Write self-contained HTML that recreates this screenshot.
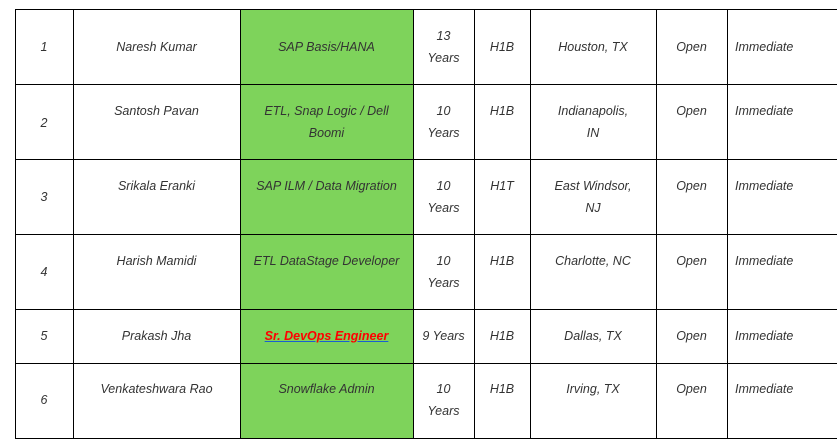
<!DOCTYPE html><html><head><style>
body{margin:0;width:837px;height:439px;background:#fff;position:relative;overflow:hidden;font-family:"Liberation Sans",sans-serif;font-style:italic;font-size:12.5px;color:#333}
.h{position:absolute;left:15px;width:822px;height:1px;background:#000}
.v{position:absolute;top:9px;width:1px;height:430px;background:#000}
.g{position:absolute;left:241px;width:172px;top:10px;height:429px;background:#7ed35b}
.t{position:absolute;line-height:16px;margin-top:-8px;text-align:center;white-space:nowrap}
.l{text-align:left}
</style></head><body>
<div class="g"></div>
<div class="h" style="top:9px"></div><div class="h" style="top:84px"></div><div class="h" style="top:159px"></div><div class="h" style="top:234px"></div><div class="h" style="top:309px"></div><div class="h" style="top:363px"></div><div class="h" style="top:438px"></div>
<div class="v" style="left:15px"></div><div class="v" style="left:73px"></div><div class="v" style="left:240px"></div><div class="v" style="left:413px"></div><div class="v" style="left:474px"></div><div class="v" style="left:530px"></div><div class="v" style="left:656px"></div><div class="v" style="left:727px"></div>
<script>
var C=[[15,73],[73,240],[240,413],[413,474],[474,530],[530,656],[656,727]];
var R=[
[[47],[47],[47],[36,58],[47],[47],[47],47],
[[123],[111],[111,133],[111,133],[111],[111,133],[111],111],
[[197],[186],[186],[186,208],[186],[186,208],[186],186],
[[272],[261],[261],[261,283],[261],[261],[261],261],
[[336],[336],[336],[336],[336],[336],[336],336],
[[400],[389],[389],[389,411],[389],[389],[389],389]];
var T=[
[["1"],["Naresh Kumar"],["SAP Basis/HANA"],["13","Years"],["H1B"],["Houston, TX"],["Open"]],
[["2"],["Santosh Pavan"],["ETL, Snap Logic / Dell","Boomi"],["10","Years"],["H1B"],["Indianapolis,","IN"],["Open"]],
[["3"],["Srikala Eranki"],["SAP ILM / Data Migration"],["10","Years"],["H1T"],["East Windsor,","NJ"],["Open"]],
[["4"],["Harish Mamidi"],["ETL DataStage Developer"],["10","Years"],["H1B"],["Charlotte, NC"],["Open"]],
[["5"],["Prakash Jha"],["<b style='color:#f00;text-decoration:underline;text-decoration-color:#1a5fd0'>Sr. DevOps Engineer</b>"],["9 Years"],["H1B"],["Dallas, TX"],["Open"]],
[["6"],["Venkateshwara Rao"],["Snowflake Admin"],["10","Years"],["H1B"],["Irving, TX"],["Open"]]];
var h="";
for(var r=0;r<6;r++){for(var c=0;c<7;c++){for(var k=0;k<T[r][c].length;k++){h+='<div class="t" style="left:'+C[c][0]+'px;width:'+(C[c][1]-C[c][0])+'px;top:'+R[r][c][k]+'px">'+T[r][c][k]+'</div>';}}
h+='<div class="t l" style="left:735px;top:'+R[r][7]+'px">Immediate</div>';}
document.write(h);
</script>
</body></html>
